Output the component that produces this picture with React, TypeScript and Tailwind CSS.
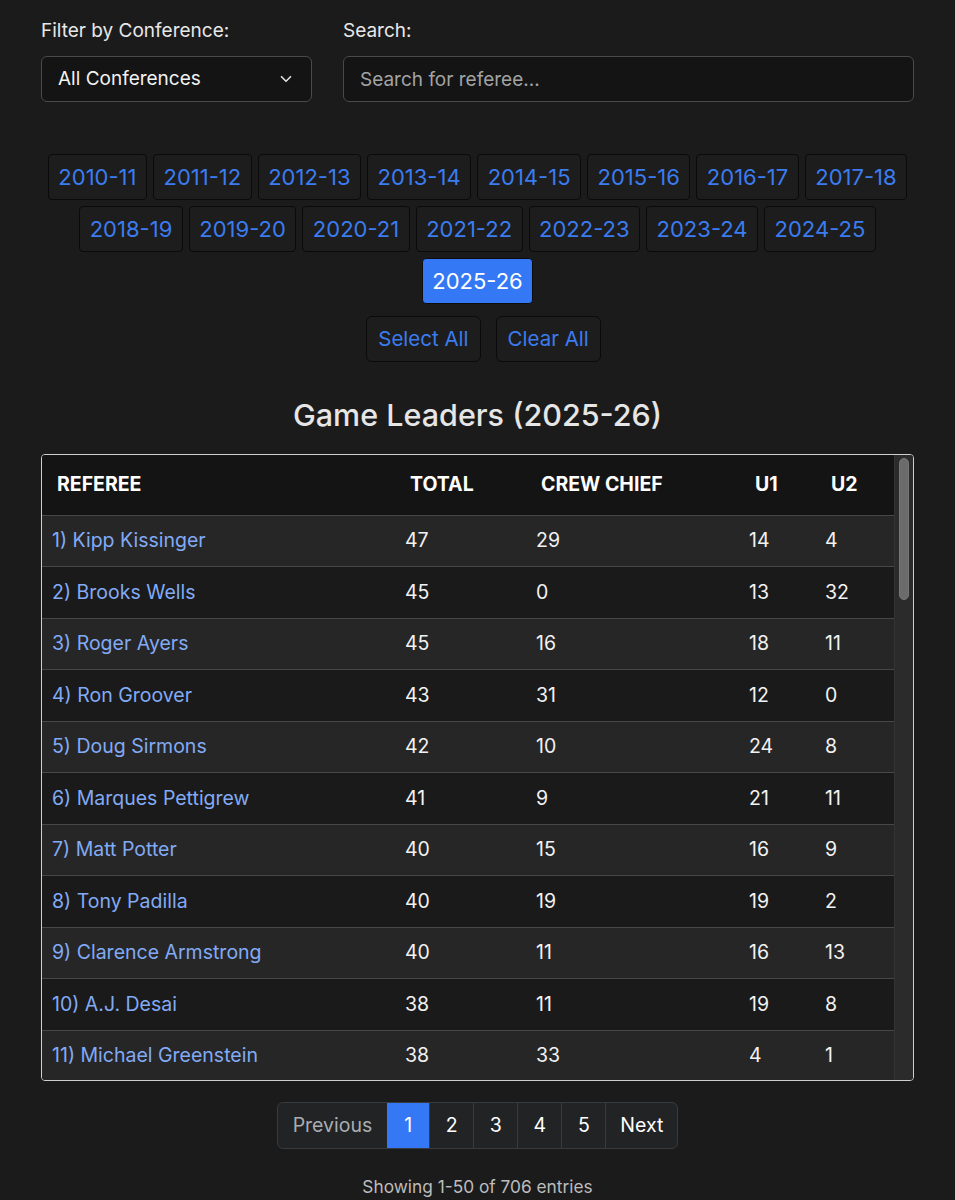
import { ChevronDown } from 'lucide-react'

const seasons = [
  '2010-11', '2011-12', '2012-13', '2013-14', '2014-15', '2015-16', '2016-17', '2017-18',
  '2018-19', '2019-20', '2020-21', '2021-22', '2022-23', '2023-24', '2024-25', '2025-26',
]

const rows: [string, number, number, number, number][] = [
  ['Kipp Kissinger', 47, 29, 14, 4],
  ['Brooks Wells', 45, 0, 13, 32],
  ['Roger Ayers', 45, 16, 18, 11],
  ['Ron Groover', 43, 31, 12, 0],
  ['Doug Sirmons', 42, 10, 24, 8],
  ['Marques Pettigrew', 41, 9, 21, 11],
  ['Matt Potter', 40, 15, 16, 9],
  ['Tony Padilla', 40, 19, 19, 2],
  ['Clarence Armstrong', 40, 11, 16, 13],
  ['A.J. Desai', 38, 11, 19, 8],
  ['Michael Greenstein', 38, 33, 4, 1],
  ['Bert Smith', 37, 22, 10, 5],
  ['Mike Eades', 37, 18, 12, 7],
  ['Lee Cassell', 36, 20, 11, 5],
  ['Jeff Anderson', 36, 14, 15, 7],
  ['Terry Oglesby', 35, 25, 8, 2],
  ['Keith Kimble', 35, 12, 14, 9],
  ['Pat Adams', 34, 17, 11, 6],
  ['Bo Boroski', 34, 21, 9, 4],
  ['Gerry Pollard', 33, 8, 16, 9],
  ['Joe Lindsay', 33, 15, 12, 6],
  ['Raymond Styons', 33, 9, 13, 11],
  ['Ted Valentine', 32, 24, 6, 2],
  ['Jamie Luckie', 32, 19, 9, 4],
  ['Mark Whitehead', 32, 11, 14, 7],
  ['Chris Rastatter', 31, 13, 12, 6],
  ['Don Daily', 31, 18, 10, 3],
  ['Rob Riley', 31, 7, 15, 9],
  ['Paul Szelc', 30, 14, 11, 5],
  ['Kelly Pfeifer', 30, 10, 12, 8],
  ['Mike Stuart', 30, 16, 9, 5],
  ["Brian O'Connell", 29, 20, 7, 2],
  ['Tom Eades', 29, 6, 14, 9],
  ['Dwayne Gladden', 29, 12, 10, 7],
  ['Steve Olson', 28, 15, 9, 4],
  ['Jeffrey Clark', 28, 9, 12, 7],
  ['Darron George', 28, 5, 13, 10],
  ['Tim Nestor', 27, 11, 10, 6],
  ['Lamar Simpson', 27, 8, 11, 8],
  ['Mike Reed', 27, 13, 9, 5],
  ['Jim Haney', 26, 10, 10, 6],
  ['Kevin Mathis', 26, 7, 12, 7],
  ['Trey Mabrey', 26, 4, 11, 11],
  ['Rick Crawford', 25, 9, 10, 6],
  ['Greg Nixon', 25, 12, 8, 5],
  ['Antinio Petty', 25, 6, 11, 8],
  ['Mark Schnur', 24, 14, 7, 3],
  ['Sean Hull', 24, 5, 10, 9],
  ['James Breeding', 24, 17, 5, 2],
  ['Chris Hall', 23, 8, 9, 6],
]

export default function App() {
  return (
    <div className="min-h-[1200px] bg-[#1b1b1c] px-[41px] pt-[18px] font-['Inter','Liberation_Sans',sans-serif] text-[#e8e8e8]">
      <div className="flex gap-[31px]">
        <div className="w-[271px]">
          <label className="block text-[19px] leading-[26px]">Filter by Conference:</label>
          <div className="mt-[12px] flex h-[46px] items-center justify-between rounded-[6px] border border-[#4a4a4a] bg-[#141414] pl-[16px] pr-[16px] text-[19px] text-[#f2f2f2]">
            <span className="pt-[1px]">All Conferences</span>
            <ChevronDown className="h-[18px] w-[18px] text-[#e0e0e0]" strokeWidth={2.2} />
          </div>
        </div>
        <div className="flex-1">
          <label className="block text-[19px] leading-[26px]">Search:</label>
          <input
            type="text"
            placeholder="Search for referee..."
            className="mt-[12px] h-[46px] w-full rounded-[6px] border border-[#4a4a4a] bg-[#141414] px-[16px] text-[19px] text-[#f2f2f2] outline-none placeholder:text-[#a3a3a3]"
          />
        </div>
      </div>

      <div className="mt-[52px] flex flex-wrap justify-center gap-x-[6px] gap-y-[6px]">
        {seasons.map((s) => {
          const active = s === '2025-26'
          return (
            <button
              key={s}
              type="button"
              className={
                active
                  ? 'h-[46px] rounded-[4px] border border-[#0d0d0d] bg-[#3478f6] px-[9.5px] text-[22px] text-white'
                  : 'h-[46px] rounded-[4px] border border-[#0a0a0a] bg-[#1d1d1d] px-[9.5px] text-[22px] text-[#3b7cf0]'
              }
            >
              {s}
            </button>
          )
        })}
      </div>

      <div className="mt-[12px] flex justify-center gap-[15px] pl-[12px]">
        <button type="button" className="h-[46px] rounded-[6px] border border-[#0a0a0a] bg-[#1d1d1d] px-[11px] text-[20.5px] text-[#3b7cf0]">
          Select All
        </button>
        <button type="button" className="h-[46px] rounded-[6px] border border-[#0a0a0a] bg-[#1d1d1d] px-[11px] text-[20.5px] text-[#3b7cf0]">
          Clear All
        </button>
      </div>

      <h2 className="mt-[33px] text-center text-[30.5px] font-medium leading-[40px] text-[#e6e6e6]">
        Game Leaders (2025-26)
      </h2>

      <div className="mt-[19px] flex h-[627px] overflow-hidden rounded-[4px] border border-[#cfcfcf]">
        <div className="flex-1 overflow-hidden">
          <table className="w-full table-fixed border-collapse text-left">
            <thead>
              <tr className="h-[60px] bg-[#141414] text-[19.5px] font-bold uppercase text-white">
                <th className="w-[358px] pl-[15px]">Referee</th>
                <th className="w-[131px] pl-[10px]">Total</th>
                <th className="w-[213px] pl-[10px]">Crew Chief</th>
                <th className="w-[76px] pl-[11px]">U1</th>
                <th className="pl-[11px]">U2</th>
              </tr>
            </thead>
            <tbody className="text-[19.5px]">
              {rows.map(([name, total, cc, u1, u2], i) => (
                <tr
                  key={name}
                  className={`h-[51.5px] border-t border-[#474747] ${i % 2 === 0 ? 'bg-[#262626]' : 'bg-[#1a1a1a]'}`}
                >
                  <td className="truncate pl-[10px] text-[#82aaf5]">
                    {i + 1}) {name}
                  </td>
                  <td className="pl-[5px] text-[#f2f2f2]">{total}</td>
                  <td className="pl-[5px] text-[#f2f2f2]">{cc}</td>
                  <td className="pl-[5px] text-[#f2f2f2]">{u1}</td>
                  <td className="pl-[5px] text-[#f2f2f2]">{u2}</td>
                </tr>
              ))}
            </tbody>
          </table>
        </div>
        <div className="w-[19px] border-l border-[#333333] bg-[#2b2b2b] pl-[4px] pt-[3px]">
          <div className="h-[142px] w-[10px] rounded-full border border-[#777777] bg-[#6b6b6b]" />
        </div>
      </div>

      <div className="mt-[21px] flex justify-center">
        <div className="flex h-[47px] overflow-hidden rounded-[6px] border border-[#373b3e] bg-[#212325] text-[19.5px]">
          <span className="flex items-center px-[15px] text-[#a9adb2]">Previous</span>
          <span className="flex w-[42px] items-center justify-center bg-[#3478f6] text-white">1</span>
          {['2', '3', '4', '5'].map((p) => (
            <span key={p} className="flex w-[44px] items-center justify-center border-l border-[#373b3e] text-white">
              {p}
            </span>
          ))}
          <span className="flex items-center border-l border-[#373b3e] px-[14px] text-white">Next</span>
        </div>
      </div>

      <p className="mt-[25px] text-center text-[17.3px] text-[#bdbdbd]">Showing 1-50 of 706 entries</p>
    </div>
  )
}
